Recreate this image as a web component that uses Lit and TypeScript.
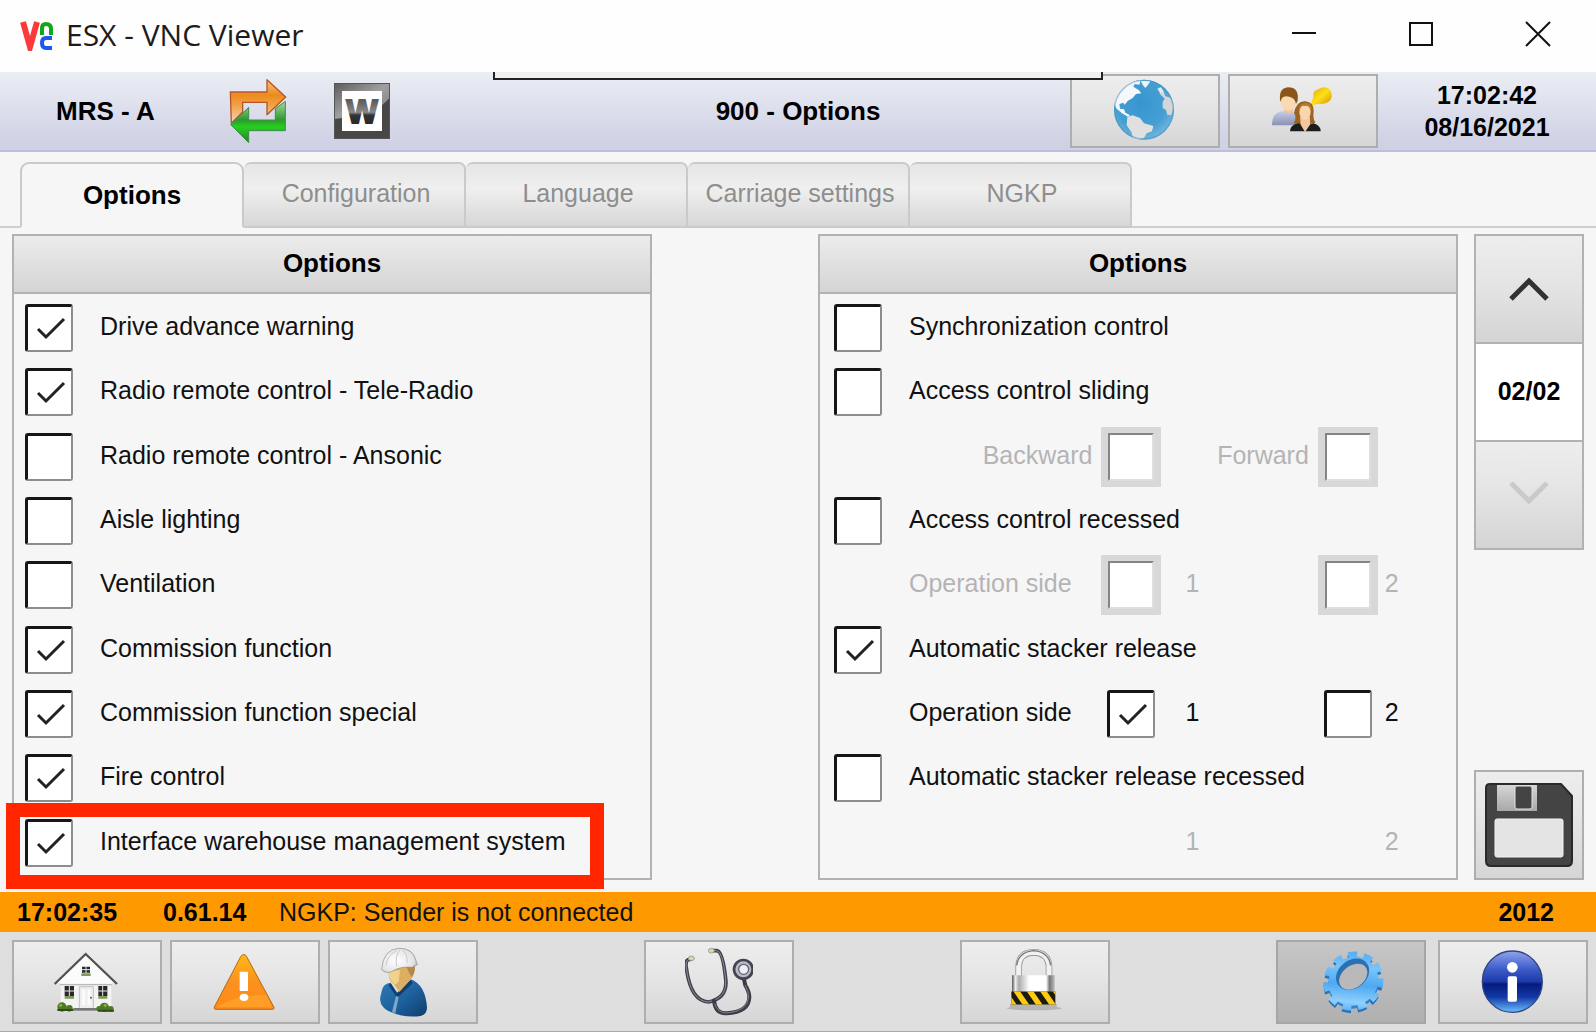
import { LitElement, html, css, svg, nothing } from "lit";
import { customElement, state } from "lit/decorators.js";

interface Option {
  id: string;
  label: string;
  checked?: boolean;
  highlight?: boolean;
}

const LEFT: Option[] = [
  { id: "drive", label: "Drive advance warning", checked: true },
  { id: "tele", label: "Radio remote control - Tele-Radio", checked: true },
  { id: "ansonic", label: "Radio remote control - Ansonic" },
  { id: "aisle", label: "Aisle lighting" },
  { id: "vent", label: "Ventilation" },
  { id: "comm", label: "Commission function", checked: true },
  { id: "commsp", label: "Commission function special", checked: true },
  { id: "fire", label: "Fire control", checked: true },
  { id: "wms", label: "Interface warehouse management system", checked: true, highlight: true },
];

const TABS = ["Options", "Configuration", "Language", "Carriage settings", "NGKP"];

const arrowsIcon = svg`<svg class="arrows" viewBox="40 20 180 198" aria-hidden="true">
  <defs>
    <linearGradient id="ao" x1="0" y1="0" x2="0" y2="1">
      <stop offset="0" stop-color="#f6c48c"/><stop offset=".35" stop-color="#ee8a1c"/>
      <stop offset=".6" stop-color="#f3a24a"/><stop offset="1" stop-color="#f6d8c4"/>
    </linearGradient>
    <linearGradient id="ag" x1="0" y1="0" x2="0" y2="1">
      <stop offset="0" stop-color="#a9d8a4"/><stop offset=".45" stop-color="#2c9a2c"/>
      <stop offset=".62" stop-color="#25d01f"/><stop offset="1" stop-color="#2a7a33"/>
    </linearGradient>
  </defs>
  <path d="M47 62H157V25L213 77L157 130V93H84V122L50 156Z" fill="url(#ao)" stroke="#b4552a" stroke-width="4" stroke-linejoin="round"/>
  <path d="M48 160L102 108V146H182V112L212 90V178H102V214Z" fill="url(#ag)" stroke="#3c8f46" stroke-width="3" stroke-linejoin="round"/>
</svg>`;

const wIcon = svg`<svg class="word" viewBox="0 0 56 56" aria-hidden="true">
  <defs>
    <linearGradient id="wg" x1="0" y1="0" x2="1" y2="1">
      <stop offset="0" stop-color="#5a5a5a"/><stop offset=".5" stop-color="#a0a0a0"/><stop offset="1" stop-color="#777"/>
    </linearGradient>
    <linearGradient id="wt" x1="0" y1="0" x2="0" y2="1">
      <stop offset=".2" stop-color="#5c5c5c"/><stop offset=".52" stop-color="#8a8a8a"/>
      <stop offset=".6" stop-color="#333"/><stop offset="1" stop-color="#222"/>
    </linearGradient>
  </defs>
  <rect width="56" height="56" fill="#474747"/>
  <path d="M0 0H56V14Q44 32 0 36Z" fill="url(#wg)"/>
  <path d="M0 0H56V56H0Z" fill="none" stroke="#555" stroke-width="2"/>
  <rect x="8" y="8" width="40" height="40" fill="#fff"/>
  <text x="28" y="40" text-anchor="middle" font-family="Liberation Sans, sans-serif" font-weight="700" font-size="33" fill="url(#wt)" stroke="url(#wt)" stroke-width="2">W</text>
</svg>`;

const globeIcon = svg`<svg class="icon" viewBox="33 -3 204 216" aria-hidden="true">
  <defs>
    <radialGradient id="gl" cx=".45" cy=".4" r=".6">
      <stop offset="0" stop-color="#3795cf"/><stop offset=".7" stop-color="#469fd3"/><stop offset="1" stop-color="#6fb5dc"/>
    </radialGradient>
    <clipPath id="gc"><circle cx="132" cy="101" r="90"/></clipPath>
  </defs>
  <circle cx="132" cy="101" r="90" fill="url(#gl)"/>
  <g clip-path="url(#gc)">
    <path d="M42 84Q46 40 84 20L122 12L118 26L104 24L100 32L116 42L124 52L108 54L98 66L84 74L74 86L70 80L58 84L60 98L72 100L76 110L90 118L84 122L66 112L50 98Z" fill="#f4f8fa"/>
    <path d="M122 14L152 14L144 26L136 36L128 26Z" fill="#eef4f7"/>
    <path d="M82 122L98 118L120 126L132 142L160 150L156 166L140 172L132 186L116 190L100 188L94 168L80 148Z" fill="#dfe0df"/>
    <path d="M176 34L190 44L196 60L212 66L222 90L214 118L202 116L198 102L188 96L188 78L194 68L180 54Z" fill="#d3d5d6"/>
    <path d="M172 38L184 34L190 48L180 50Z" fill="#e6ebed"/>
  </g>
  <circle cx="132" cy="101" r="88" fill="none" stroke="#3d86b4" stroke-opacity=".45" stroke-width="4"/>
</svg>`;

const usersIcon = svg`<svg class="icon" viewBox="507 -3 204 216" aria-hidden="true">
  <defs>
    <linearGradient id="us" x1="0" y1="0" x2="0" y2="1"><stop offset="0" stop-color="#c6cce4"/><stop offset="1" stop-color="#8991b4"/></linearGradient>
    <linearGradient id="uy" x1="0" y1="0" x2="1" y2="1"><stop offset="0" stop-color="#e0a800"/><stop offset=".5" stop-color="#ffdf1a"/><stop offset="1" stop-color="#d09000"/></linearGradient>
  </defs>
  <path d="M516 148Q516 108 548 106H572Q594 110 592 148Z" fill="url(#us)"/>
  <path d="M552 92H580V106L566 114L552 106Z" fill="#f0c49c"/>
  <ellipse cx="566" cy="76" rx="23" ry="28" fill="#fbd9b5"/>
  <path d="M541 78Q534 36 564 34Q598 34 593 74L588 84Q586 66 568 62Q552 58 546 66Z" fill="#8a5516"/>
  <path d="M632 88L640 62Q636 46 654 40Q670 30 684 36Q698 46 695 64Q690 82 666 84Q648 82 640 88Z" fill="url(#uy)"/>
  <path d="M580 142Q592 128 582 110Q590 74 616 76Q642 78 641 106Q638 128 646 140L630 144H594Z" fill="#9c6420"/>
  <path d="M570 166Q570 146 596 142L616 150L640 142Q662 148 662 166Z" fill="#1d1d20"/>
  <path d="M600 122H630V146L615 168L602 146Z" fill="#f3c69c"/>
  <ellipse cx="615" cy="108" rx="17" ry="23" fill="#fbd5ad"/>
  <path d="M597 110Q600 84 614 90Q630 86 634 108Q640 82 616 80Q594 82 597 110Z" fill="#b57a2c"/>
</svg>`;

const houseIcon = svg`<svg class="icon" viewBox="159 48 204 216" aria-hidden="true">
  <path d="M182 156H334V236H182Z" fill="#f3f3f3"/>
  <path d="M257 76L344 160H170Z" fill="#fbfbfb"/>
  <path d="M180 164H336" stroke="#b9b9b9" stroke-width="4"/>
  <path d="M164 162L257 72L351 162" fill="none" stroke="#55524e" stroke-width="7"/>
  <path d="M246 110H270V128H246ZM194 168H222V198H194ZM295 168H322V198H295Z" fill="#26282b"/>
  <path d="M258 108V130M246 119H270M208 168V200M194 183H222M308 168V200M295 183H322" stroke="#e8e8e8" stroke-width="3"/>
  <path d="M244 130H272V138H244ZM194 198H222V206H194ZM295 198H322V206H295Z" fill="#7f9a55"/>
  <path d="M238 170H280V236H238Z" fill="#ededed" stroke="#c2c2c2" stroke-width="3"/>
  <path d="M246 178H256V226H246ZM262 178H272V226H262Z" fill="#fafafa"/>
  <circle cx="273" cy="203" r="3" fill="#555"/>
  <path d="M220 234H296V242H220Z" fill="#777"/>
  <g fill="#4f7a24">
    <circle cx="186" cy="231" r="14"/><circle cx="208" cy="235" r="10"/>
    <circle cx="313" cy="232" r="14"/><circle cx="332" cy="237" r="9"/><circle cx="297" cy="236" r="8"/>
  </g>
  <path d="M172 240H220M294 242H342" stroke="#2f4c1a" stroke-width="6"/>
  <circle cx="182" cy="226" r="5" fill="#86ab4b"/><circle cx="316" cy="226" r="5" fill="#86ab4b"/>
</svg>`;

const warnIcon = svg`<svg class="icon" viewBox="633 48 204 216" aria-hidden="true">
  <defs><linearGradient id="wa" x1="0" y1="0" x2="0" y2="1">
    <stop offset="0" stop-color="#ffb914"/><stop offset=".5" stop-color="#fb9120"/><stop offset="1" stop-color="#ff8a14"/>
  </linearGradient></defs>
  <path d="M731 74Q736 72 740 80L822 232Q824 238 816 238H648Q640 238 643 231L722 80Q726 73 731 74Z" fill="url(#wa)" stroke="#b26a1c" stroke-width="3"/>
  <path d="M652 230Q720 190 800 196L816 232H652Z" fill="#ffa52e" fill-opacity=".7"/>
  <rect x="719" y="125" width="25" height="58" rx="2" fill="#fff"/>
  <ellipse cx="732" cy="202" rx="13" ry="11" fill="#fff"/>
</svg>`;

const workerIcon = svg`<svg class="icon" viewBox="1107 48 204 216" aria-hidden="true">
  <defs>
    <linearGradient id="wb" x1="0" y1="0" x2="1" y2="1"><stop offset="0" stop-color="#2f7bb4"/><stop offset=".5" stop-color="#1d63a0"/><stop offset="1" stop-color="#0f3d6d"/></linearGradient>
    <radialGradient id="wh" cx=".4" cy=".5" r=".7"><stop offset="0" stop-color="#fff"/><stop offset=".7" stop-color="#e4e4e6"/><stop offset="1" stop-color="#a0a0a4"/></radialGradient>
  </defs>
  <path d="M1146 180Q1150 160 1172 158L1192 188L1232 148Q1276 164 1281 232Q1282 252 1262 258Q1214 264 1172 246Q1136 230 1141 200Z" fill="url(#wb)"/>
  <path d="M1172 160L1190 190L1232 150L1238 160L1192 204L1166 166Z" fill="#123f6e"/>
  <path d="M1166 118L1240 100Q1248 124 1234 146L1198 186L1184 166Q1162 152 1166 118Z" fill="#dcae62"/>
  <path d="M1166 124L1200 120L1196 156L1184 164Q1164 146 1166 124Z" fill="#f0d28c"/>
  <path d="M1218 104L1244 102Q1248 124 1236 142Q1226 130 1218 104Z" fill="#b5884a"/>
  <path d="M1188 198L1176 246L1186 250L1196 200Z" fill="#7fa7c8"/>
  <path d="M1145 118Q1150 58 1196 55Q1240 54 1248 92L1252 104L1236 112Q1200 108 1172 126Q1152 130 1145 118Z" fill="url(#wh)" stroke="#8e8e90" stroke-width="2"/>
  <path d="M1158 106Q1162 74 1190 62M1190 108Q1184 76 1200 60M1222 98Q1222 72 1208 60" fill="none" stroke="#c9c9cc" stroke-width="3"/>
</svg>`;

const stethIcon = svg`<svg class="icon" viewBox="195 48 204 216" aria-hidden="true">
  <g fill="none" stroke-linecap="round">
    <path d="M212 88Q194 86 199 114Q212 214 266 216Q324 204 317 146Q308 62 290 62H276" stroke="#41414b" stroke-width="11"/>
    <path d="M212 88Q194 86 199 114Q212 214 266 216Q324 204 317 146Q308 62 290 62H276" stroke="#8c8c99" stroke-width="3"/>
    <path d="M282 212Q286 252 320 250Q386 246 388 202Q388 186 376 166L372 148" stroke="#3c3c46" stroke-width="12"/>
    <path d="M284 222Q294 250 320 249Q382 244 386 202Q386 186 376 166" stroke="#83838f" stroke-width="3"/>
  </g>
  <ellipse cx="214" cy="85" rx="9" ry="7" fill="#d9d3b8" stroke="#8b8672" stroke-width="2"/>
  <ellipse cx="274" cy="62" rx="9" ry="7" fill="#d9d3b8" stroke="#8b8672" stroke-width="2"/>
  <circle cx="370" cy="118" r="28" fill="#b9bac8" stroke="#44444e" stroke-width="8"/>
  <circle cx="371" cy="118" r="15" fill="#eeeefa" stroke="#62626e" stroke-width="4"/>
</svg>`;

const lockIcon = svg`<svg class="icon" viewBox="1143 48 204 216" aria-hidden="true">
  <defs>
    <linearGradient id="lk" x1="0" y1="0" x2="1" y2="0">
      <stop offset="0" stop-color="#555"/><stop offset=".08" stop-color="#eee"/><stop offset=".16" stop-color="#aaa"/>
      <stop offset=".4" stop-color="#fff"/><stop offset=".8" stop-color="#fff"/><stop offset=".88" stop-color="#777"/><stop offset="1" stop-color="#bbb"/>
    </linearGradient>
    <clipPath id="lc"><rect x="1174" y="184" width="132" height="40"/></clipPath>
  </defs>
  <ellipse cx="1243" cy="235" rx="82" ry="6" fill="#999" fill-opacity=".6"/>
  <path d="M1196 138V108Q1198 68 1241 67Q1284 68 1287 108V138" fill="none" stroke="#999" stroke-width="20"/>
  <path d="M1196 138V108Q1198 68 1241 67Q1284 68 1287 108V138" fill="none" stroke="#f1f1f1" stroke-width="15"/>
  <path d="M1190 106Q1196 66 1241 62Q1286 66 1292 106" fill="none" stroke="#777" stroke-width="4"/>
  <path d="M1176 136H1304V186H1176Z" fill="url(#lk)"/>
  <rect x="1170" y="222" width="140" height="14" fill="#b5b5b5"/>
  <g clip-path="url(#lc)">
    <rect x="1170" y="184" width="140" height="40" fill="#1b1b16"/>
    <path d="M1180 184H1200L1228 224H1208ZM1220 184H1240L1268 224H1248ZM1260 184H1280L1308 224H1288ZM1160 184H1162L1190 224H1168ZM1298 184H1318V212Z" fill="#fccb12"/>
  </g>
</svg>`;

const gearIcon = svg`<svg class="icon" viewBox="171 198 204 216" aria-hidden="true">
  <defs><linearGradient id="ge" x1="1" y1="0" x2="0" y2="1">
    <stop offset="0" stop-color="#4aa4ee"/><stop offset=".3" stop-color="#79c4fa"/><stop offset=".55" stop-color="#4ea8f2"/><stop offset=".8" stop-color="#8fd0fd"/><stop offset="1" stop-color="#3b97e8"/>
  </linearGradient></defs>
  <g transform="rotate(-38 280 305)">
    <ellipse cx="275" cy="310" rx="78" ry="74" fill="none" stroke="#2672bb" stroke-width="24" stroke-dasharray="25 18.4"/>
    <ellipse cx="276" cy="310" rx="77" ry="73" fill="#2f83d2"/>
    <ellipse cx="281" cy="304" rx="79" ry="74" fill="none" stroke="url(#ge)" stroke-width="26" stroke-dasharray="25 18.7"/>
    <ellipse cx="281" cy="304" rx="77" ry="72" fill="url(#ge)"/>
    <ellipse cx="292" cy="286" rx="54" ry="42" fill="#2b70b4"/>
    <ellipse cx="289" cy="293" rx="47" ry="33" fill="#b9b9b9"/>
  </g>
</svg>`;

const infoIcon = svg`<svg class="icon" viewBox="657 198 204 216" aria-hidden="true">
  <defs>
    <linearGradient id="in" x1="0" y1="0" x2="0" y2="1">
      <stop offset="0" stop-color="#8fa3ee"/><stop offset=".3" stop-color="#3c5bc8"/><stop offset=".5" stop-color="#1d3aa8"/>
      <stop offset=".54" stop-color="#051a7c"/><stop offset=".75" stop-color="#1238a6"/><stop offset="1" stop-color="#6cc0ff"/>
    </linearGradient>
  </defs>
  <ellipse cx="757" cy="305" rx="90" ry="92" fill="url(#in)" stroke="#33447e" stroke-width="4"/>
  <circle cx="757" cy="262" r="16" fill="#fff"/>
  <rect x="743" y="289" width="28" height="76" rx="5" fill="#fff"/>
</svg>`;

const saveIcon = svg`<svg class="save-icon" viewBox="0 0 88 84" aria-hidden="true">
  <defs><linearGradient id="sv" x1="0" y1="0" x2="0" y2="1"><stop offset="0" stop-color="#d6d6d6"/><stop offset="1" stop-color="#a8a8a8"/></linearGradient></defs>
  <path d="M5 1H76L87 13V78Q87 83 82 83H6Q1 83 1 78V5Q1 1 5 1Z" fill="#444" stroke="#2a2a2a" stroke-width="2"/>
  <rect x="12" y="2" width="40" height="26" fill="url(#sv)"/>
  <rect x="30" y="3" width="17" height="23" rx="2" fill="#444" stroke="#e2e2e2"/>
  <rect x="10" y="36" width="68" height="38" rx="2" fill="#e4e4e4" stroke="#f4f4f4"/>
</svg>`;

@customElement("app-root")
export class AppRoot extends LitElement {
  @state() private activeTab = 0;

  @state() private values: Record<string, boolean> = {};

  static styles = css`
    :host {
      display: flex;
      flex-direction: column;
      min-height: 100vh;
      background: #f6f6f6;
      color: #111;
      font: 25px/32px "Liberation Sans", Arial, sans-serif;
    }
    * { box-sizing: border-box; }
    h1, h2, ul, p { margin: 0; padding: 0; font-size: inherit; }
    button { font: inherit; color: inherit; padding: 0; border: 0; border-radius: 0; background: none; }
    svg { display: block; flex: none; }
    .bold { font-weight: 700; color: #000; }
    .head { font-size: 26px; font-weight: 700; color: #000; }

    .titlebar { display: flex; align-items: center; height: 72px; background: #fefefe; padding-left: 20px; gap: 12px; }
    .vnc { width: 34px; height: 30px; }
    .title { flex: 1; font: 30px/40px "Open Sans", "Noto Sans", sans-serif; color: #1c1c1c; padding-bottom: 2px; }
    .winbtns { display: flex; height: 100%; padding-bottom: 4px; }
    .winbtns button { width: 117px; display: grid; place-content: center; }
    .winbtns svg { width: 26px; height: 26px; }

    .header {
      position: relative;
      display: grid;
      grid-template-columns: 1fr auto 1fr;
      align-items: center;
      height: 80px;
      background: linear-gradient(#ebedf4, #dcdeec 50%, #d0d1e4 90%);
      border-bottom: 2px solid #bbbedb;
    }
    .notch {
      position: absolute; top: 0; left: 50%; transform: translateX(-50%);
      width: 610px; height: 8px; background: #f0f0f0;
      border: 2px solid #222; border-top: 0; z-index: 1;
    }
    .status { display: flex; align-items: center; padding-left: 56px; }
    .station { width: 172px; }
    .arrows { width: 60px; height: 66px; margin-right: 46px; }
    .word { width: 56px; height: 56px; }
    .tools { display: flex; justify-content: flex-end; align-items: center; }
    .clock { width: 218px; text-align: center; }
    .tile {
      display: grid; place-content: center; width: 150px; height: 84px;
      background: linear-gradient(#ededed, #e6e6e6 40%, #d6d6d6);
      border: 2px solid #aeaeae;
    }
    .tile.selected { background: linear-gradient(#c6c6c6, #b0b0b0); border-color: #a6a6a6; }
    .icon { width: 68px; height: 72px; }
    .tools .tile { height: 74px; margin-right: 8px; }
    .tools .tile + .tile { margin-right: 0; }

    .tabs { display: flex; padding-top: 10px; height: 76px; }
    .tabs::before { content: ""; width: 20px; border-bottom: 2px solid #cfcfcf; }
    .tabs::after { content: ""; flex: 1; border-bottom: 2px solid #cfcfcf; }
    .tab {
      flex: 0 1 222px; color: #8e8e8e; padding: 0 0 4px 4px; white-space: nowrap;
      background: linear-gradient(#e6e6e6, #efefef 40%, #d7d7d7);
      border: 2px solid #cacaca; border-left-width: 0;
      border-radius: 7px 7px 0 0;
    }
    .tab.active {
      color: #000; background: #f6f6f6; border-left-width: 2px; border-bottom-color: transparent;
      border-radius: 9px 9px 0 0; flex-basis: 224px; padding: 0;
    }

    .main {
      flex: 1; display: grid; grid-template-columns: 640fr 166fr 640fr 16fr 110px;
      padding: 6px 12px 12px;
    }
    .panel { display: flex; flex-direction: column; border: 2px solid #b2b2b2; min-width: 0; }
    .panel.right { grid-column: 3; }
    .panel h2 {
      height: 58px; text-align: center; line-height: 54px;
      background: linear-gradient(#ececec, #d4d4d4); border-bottom: 2px solid #b2b2b2;
    }
    .rows { flex: 1; list-style: none; display: grid; grid-template-rows: repeat(9, minmax(0, 1fr)); padding: 2px 0 3px; }
    .row { position: relative; display: flex; align-items: center; padding-left: 11px; white-space: nowrap; }
    .right .row { padding-left: 14px; }
    .row label { padding: 0 0 4px 27px; }
    .highlight {
      position: absolute; top: -8px; bottom: -14px; left: -8px; right: 46px;
      border: 14px solid #ff2600; pointer-events: none; z-index: 1;
    }
    .box { display: grid; width: 48px; height: 48px; flex: none; }
    .box > * { grid-area: 1 / 1; }
    .box input {
      appearance: none; margin: 0; width: 48px; height: 48px; background: #fff;
      border: 2px solid #8d8d8d; border-top: 3px solid #161616; border-left: 3px solid #161616;
      border-radius: 3px;
    }
    .box svg { width: 48px; height: 48px; pointer-events: none; }
    .box.off { width: 60px; height: 60px; background: #d8d8d8; place-content: center; }
    .box.off input {
      width: 46px; height: 48px; border-radius: 0; border: 2px solid #dedede;
      border-top-color: #858585; border-left-color: #858585;
    }

    .sub {
      display: grid; grid-template-columns: 192fr 60px 156fr 60px 78fr;
      align-items: center; white-space: nowrap; padding-left: 89px;
    }
    .sub > :not(.box) { padding-bottom: 4px; }
    .sub .box { justify-self: center; }
    .sub .end { justify-self: end; padding-right: 9px; }
    .sub .one { padding-left: 24px; grid-column: 3; }
    .sub .two { padding-left: 7px; grid-column: 5; }
    .sub.muted { color: #b4b4b4; }

    .side { grid-column: 5; display: flex; flex-direction: column; justify-content: space-between; }
    .pager { border: 2px solid #b2b2b2; }
    .pager button {
      display: grid; place-content: center; width: 100%; height: 106px;
      background: linear-gradient(#ededed, #e6e6e6 40%, #d4d4d4);
    }
    .pager svg { width: 40px; height: 26px; }
    .page { height: 100px; line-height: 94px; text-align: center; background: #fff; border: solid #b2b2b2; border-width: 2px 0; }
    .save { width: 100%; height: 110px; }
    .save-icon { width: 88px; height: 84px; }

    .message {
      display: grid; grid-template-columns: 146px 116px 1fr auto; align-items: center;
      height: 40px; padding: 0 42px 0 17px; background: #ff9900;
    }
    .nav {
      display: flex; gap: 12px; height: 100px; padding: 8px 8px 0 12px;
      background: #dedede; border-bottom: 1px solid #a9a9a9;
    }
    .nav .group { flex: 1; display: grid; grid-template-columns: repeat(9, minmax(0, 1fr)); gap: 8px; }
    .nav .group .tile { width: 100%; }
    .c5 { grid-column: 5; }
    .c7 { grid-column: 7; }
    .c9 { grid-column: 9; }
  `;

  private toggle(id: string, on: boolean) {
    this.values = { ...this.values, [id]: on };
  }

  private box(id: string, initial = false, off = false) {
    const on = this.values[id] ?? initial;
    return html`<span class="box ${off ? "off" : ""}">
      <input type="checkbox" id=${id} .checked=${on} ?disabled=${off}
        @change=${(e: Event) => this.toggle(id, (e.target as HTMLInputElement).checked)} />
      ${on
        ? html`<svg viewBox="0 0 48 48" aria-hidden="true"><path d="M13 25L21 33L39 15" fill="none" stroke="#222" stroke-width="3"/></svg>`
        : nothing}
    </span>`;
  }

  private row(o: Option) {
    return html`<li class="row">
      ${this.box(o.id, !!o.checked)}
      <label for=${o.id}>${o.label}</label>
      ${o.highlight ? html`<span class="highlight"></span>` : nothing}
    </li>`;
  }

  render() {
    return html`
      <div class="titlebar">
        <svg class="vnc" viewBox="0 0 34 30" fill="none" stroke-width="4" aria-hidden="true">
          <path d="M3 1L10 26L17 1" stroke="#fb3b3b" stroke-width="6"/>
          <path d="M22 14V7Q22 3 26 3Q31 3 31 8V14" stroke="#12a51e"/>
          <path d="M32 17H26Q22 17 22 22Q22 27 26 27H32" stroke="#1f55f5"/>
        </svg>
        <h1 class="title">ESX - VNC Viewer</h1>
        <div class="winbtns">
          <button aria-label="Minimize"><svg viewBox="0 0 26 26"><path d="M1 12H25" stroke="#111" stroke-width="2"/></svg></button>
          <button aria-label="Maximize"><svg viewBox="0 0 26 26"><path d="M2 2H24V24H2Z" fill="none" stroke="#111" stroke-width="2"/></svg></button>
          <button aria-label="Close"><svg viewBox="0 0 26 26"><path d="M1 1L25 25M25 1L1 25" stroke="#111" stroke-width="2"/></svg></button>
        </div>
      </div>

      <header class="header">
        <span class="notch"></span>
        <div class="status">
          <span class="station head">MRS - A</span>${arrowsIcon}${wIcon}
        </div>
        <h2 class="head">900 - Options</h2>
        <div class="tools">
          <button class="tile" aria-label="Network">${globeIcon}</button>
          <button class="tile" aria-label="Users">${usersIcon}</button>
          <div class="clock bold"><div>17:02:42</div><div>08/16/2021</div></div>
        </div>
      </header>

      <div class="tabs" role="tablist">
        ${TABS.map((t, i) => html`<button role="tab" aria-selected=${i === this.activeTab}
          class="tab ${i === this.activeTab ? "active head" : ""}"
          @click=${() => (this.activeTab = i)}>${t}</button>`)}
      </div>

      <main class="main">
        <section class="panel">
          <h2 class="head">Options</h2>
          <ul class="rows">${LEFT.map((o) => this.row(o))}</ul>
        </section>

        <section class="panel right">
          <h2 class="head">Options</h2>
          <ul class="rows">
            ${this.row({ id: "sync", label: "Synchronization control" })}
            ${this.row({ id: "sliding", label: "Access control sliding" })}
            <li class="sub muted">
              <label class="end" for="backward">Backward</label>${this.box("backward", false, true)}
              <label class="end" for="forward">Forward</label>${this.box("forward", false, true)}
            </li>
            ${this.row({ id: "recessed", label: "Access control recessed" })}
            <li class="sub muted">
              <span>Operation side</span>${this.box("rs1", false, true)}
              <label class="one" for="rs1">1</label>${this.box("rs2", false, true)}
              <label class="two" for="rs2">2</label>
            </li>
            ${this.row({ id: "auto", label: "Automatic stacker release", checked: true })}
            <li class="sub">
              <span>Operation side</span>${this.box("as1", true)}
              <label class="one" for="as1">1</label>${this.box("as2")}
              <label class="two" for="as2">2</label>
            </li>
            ${this.row({ id: "autorec", label: "Automatic stacker release recessed" })}
            <li class="sub muted"><span class="one">1</span><span class="two">2</span></li>
          </ul>
        </section>

        <aside class="side">
          <div class="pager">
            <button aria-label="Previous page"><svg viewBox="0 0 40 26"><path d="M2 23L20 5L38 23" fill="none" stroke="#333" stroke-width="5"/></svg></button>
            <div class="page bold">02/02</div>
            <button aria-label="Next page" disabled><svg viewBox="0 0 40 26"><path d="M2 1L20 19L38 1" fill="none" stroke="#cacaca" stroke-width="5"/></svg></button>
          </div>
          <button class="tile save" aria-label="Save">${saveIcon}</button>
        </aside>
      </main>

      <div class="message" role="status">
        <span class="bold">17:02:35</span><span class="bold">0.61.14</span>
        <span>NGKP: Sender is not connected</span><span class="bold">2012</span>
      </div>

      <nav class="nav">
        <div class="group">
          <button class="tile" aria-label="Home">${houseIcon}</button>
          <button class="tile" aria-label="Warnings">${warnIcon}</button>
          <button class="tile" aria-label="Operator">${workerIcon}</button>
          <button class="tile c5" aria-label="Diagnostics">${stethIcon}</button>
          <button class="tile c7" aria-label="Lock">${lockIcon}</button>
          <button class="tile selected c9" aria-label="Settings">${gearIcon}</button>
        </div>
        <button class="tile" aria-label="Information">${infoIcon}</button>
      </nav>
    `;
  }
}
